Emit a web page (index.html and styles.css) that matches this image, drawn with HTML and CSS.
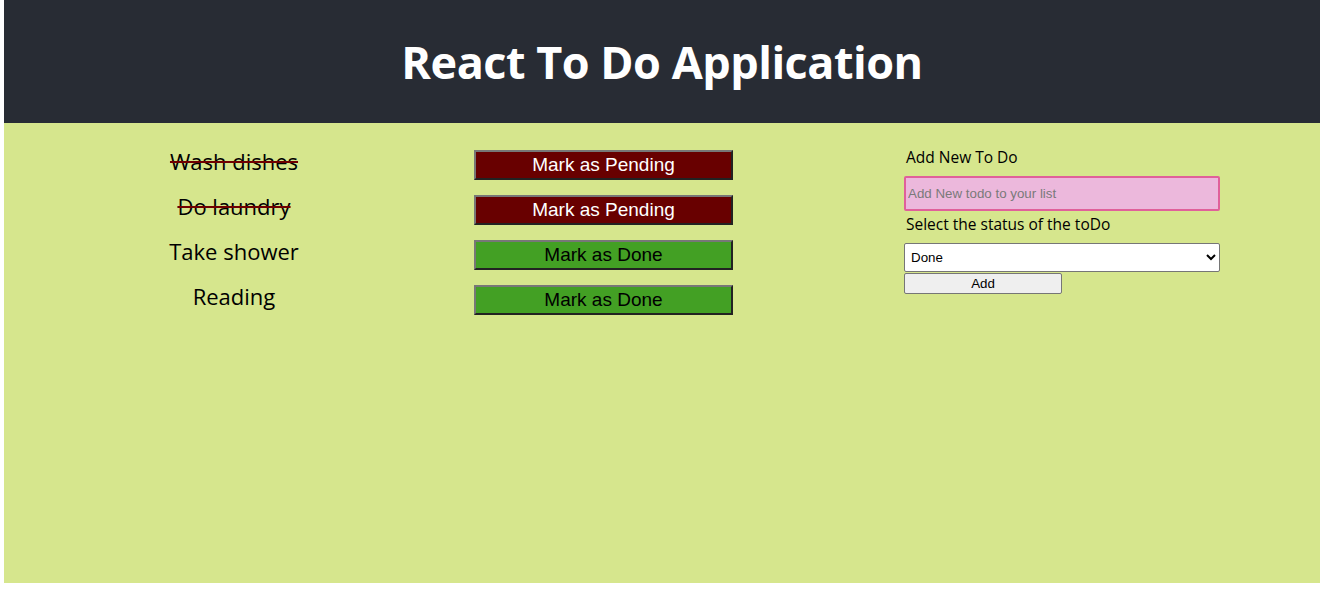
FILE: index.html
```html
<!DOCTYPE html>
<html lang="en">
<head>
<meta charset="utf-8">
<title>React To Do Application</title>
<link rel="stylesheet" href="styles.css">
</head>
<body>
<div class="app">
  <header class="app-header">
    <h1 class="app-title">React To Do Application</h1>
  </header>
  <main class="content">
    <ul class="todo-list">
      <li class="todo-item">
        <span class="todo-text done">Wash dishes</span>
        <button class="todo-btn pending" type="button">Mark as Pending</button>
      </li>
      <li class="todo-item">
        <span class="todo-text done">Do laundry</span>
        <button class="todo-btn pending" type="button">Mark as Pending</button>
      </li>
      <li class="todo-item">
        <span class="todo-text">Take shower</span>
        <button class="todo-btn mark-done" type="button">Mark as Done</button>
      </li>
      <li class="todo-item">
        <span class="todo-text">Reading</span>
        <button class="todo-btn mark-done" type="button">Mark as Done</button>
      </li>
    </ul>
    <form class="todo-form">
      <label class="form-label" for="new-todo">Add New To Do</label>
      <input class="form-input" id="new-todo" type="text" placeholder="Add New todo to your list">
      <label class="form-label status-label" for="status">Select the status of the toDo</label>
      <select class="form-select" id="status">
        <option>Done</option>
        <option>Pending</option>
      </select>
      <button class="add-btn" type="button">Add</button>
    </form>
  </main>
</div>
</body>
</html>
```

FILE: styles.css
```css
html, body {
  margin: 0;
  padding: 0;
  background: #ffffff;
}

.app {
  margin: 0 4px;
  height: 583px;
  display: flex;
  flex-direction: column;
  font-family: "Open Sans", "Noto Sans", sans-serif;
}

.app-header {
  background: #282c34;
  height: 123px;
  display: flex;
  align-items: center;
  justify-content: center;
}

.app-title {
  margin: 0 0 1px;
  color: #ffffff;
  font-size: 45px;
  font-weight: 700;
  letter-spacing: -0.5px;
}

.content {
  flex: 1;
  background: #d6e68d;
  display: flex;
  align-items: flex-start;
  padding-top: 27px;
}

.todo-list {
  list-style: none;
  margin: 0 171px 0 0;
  padding: 0;
  display: flex;
  flex-direction: column;
  gap: 15px;
}

.todo-item {
  display: grid;
  grid-template-columns: 460px 259px;
  column-gap: 10px;
  align-items: center;
  height: 30px;
}

.todo-text {
  text-align: center;
  font-size: 22px;
  line-height: 22px;
  padding-bottom: 8px;
  color: #000000;
}

.todo-text.done {
  text-decoration: line-through;
  text-decoration-color: #700000;
  text-decoration-thickness: 2px;
}

.todo-btn {
  box-sizing: border-box;
  height: 30px;
  width: 259px;
  margin: 0;
  padding: 0;
  font-family: "Liberation Sans", Arial, sans-serif;
  font-size: 19px;
  border-style: solid;
  border-width: 2px;
  border-color: #777777 #222222 #222222 #777777;
  cursor: pointer;
}

.todo-btn.pending {
  background: #680000;
  color: #ffffff;
}

.todo-btn.mark-done {
  background: #43a024;
  color: #000000;
}

.todo-form {
  width: 316px;
  display: flex;
  flex-direction: column;
  align-items: flex-start;
}

.form-label {
  font-size: 15.5px;
  color: #000000;
  margin-left: 2px;
  line-height: 14px;
}

.form-input {
  box-sizing: border-box;
  width: 316px;
  height: 35px;
  margin: 12px 0 6px;
  padding: 0 2px;
  background: #ecb8dc;
  border: 2px solid #e0609a;
  border-radius: 2px;
  font-family: "Liberation Sans", Arial, sans-serif;
  font-size: 13.33px;
  outline: none;
}

.form-input::placeholder {
  color: #7a7a7a;
}

.status-label {
  margin-bottom: 12px;
}

.form-select {
  box-sizing: border-box;
  width: 316px;
  height: 29px;
  margin: 0;
  padding: 0 2px;
  background: #ffffff;
  border: 1px solid #767676;
  border-radius: 2px;
  font-family: "Liberation Sans", Arial, sans-serif;
  font-size: 13.33px;
  color: #000000;
}

.add-btn {
  box-sizing: border-box;
  width: 158px;
  height: 21px;
  margin: 1px 0 0;
  padding: 0;
  background: #efefef;
  border: 1px solid #767676;
  border-radius: 2px;
  font-family: "Liberation Sans", Arial, sans-serif;
  font-size: 13.33px;
  color: #000000;
}
```
